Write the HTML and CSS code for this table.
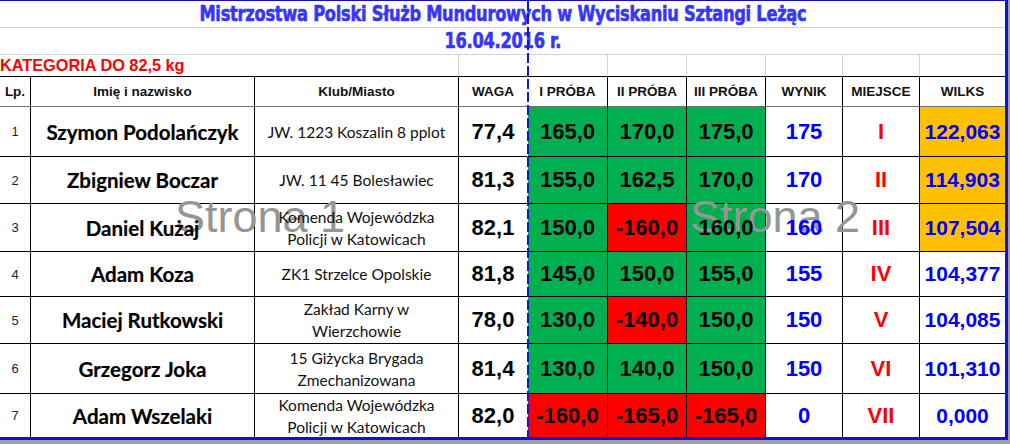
FILE: index.html
```html
<!DOCTYPE html>
<html lang="pl">
<head>
<meta charset="utf-8">
<link rel="stylesheet" href="styles.css">
</head>
<body>
<div class="sheet">
  <div class="grid">
    <div class="title t1"><span>Mistrzostwa Polski Służb Mundurowych w Wyciskaniu Sztangi Leżąc</span></div>
    <div class="title t2"><span>16.04.2016 r.</span></div>

    <div class="cat span3"><span>KATEGORIA DO 82,5 kg</span></div>
    <div class="cat dash"></div>
    <div class="cat"></div>
    <div class="cat"></div>
    <div class="cat"></div>
    <div class="cat"></div>
    <div class="cat"></div>
    <div class="cat last"></div>

    <div class="c h"><span>Lp.</span></div>
    <div class="c h"><span>Imię i nazwisko</span></div>
    <div class="c h"><span>Klub/Miasto</span></div>
    <div class="c h dash"><span>WAGA</span></div>
    <div class="c h"><span>I PRÓBA</span></div>
    <div class="c h"><span>II PRÓBA</span></div>
    <div class="c h"><span>III PRÓBA</span></div>
    <div class="c h"><span>WYNIK</span></div>
    <div class="c h"><span>MIEJSCE</span></div>
    <div class="c h last"><span>WILKS</span></div>

    <div class="c lp"><span>1</span></div>
    <div class="c name"><span>Szymon Podolańczyk</span></div>
    <div class="c club"><span>JW. 1223 Koszalin 8 pplot</span></div>
    <div class="c num dash"><span>77,4</span></div>
    <div class="c num g"><span>165,0</span></div>
    <div class="c num g"><span>170,0</span></div>
    <div class="c num g"><span>175,0</span></div>
    <div class="c num blue"><span>175</span></div>
    <div class="c num red"><span>I</span></div>
    <div class="c num blue wilks o last"><span>122,063</span></div>

    <div class="c lp"><span>2</span></div>
    <div class="c name"><span>Zbigniew Boczar</span></div>
    <div class="c club"><span>JW. 11 45 Bolesławiec</span></div>
    <div class="c num dash"><span>81,3</span></div>
    <div class="c num g"><span>155,0</span></div>
    <div class="c num g"><span>162,5</span></div>
    <div class="c num g"><span>170,0</span></div>
    <div class="c num blue"><span>170</span></div>
    <div class="c num red"><span>II</span></div>
    <div class="c num blue wilks o last"><span>114,903</span></div>

    <div class="c lp"><span>3</span></div>
    <div class="c name"><span>Daniel Kużaj</span></div>
    <div class="c club"><span>Komenda Wojewódzka<br>Policji w Katowicach</span></div>
    <div class="c num dash"><span>82,1</span></div>
    <div class="c num g"><span>150,0</span></div>
    <div class="c num r"><span>-160,0</span></div>
    <div class="c num g"><span>160,0</span></div>
    <div class="c num blue"><span>160</span></div>
    <div class="c num red"><span>III</span></div>
    <div class="c num blue wilks o last"><span>107,504</span></div>

    <div class="c lp"><span>4</span></div>
    <div class="c name"><span>Adam Koza</span></div>
    <div class="c club"><span>ZK1 Strzelce Opolskie</span></div>
    <div class="c num dash"><span>81,8</span></div>
    <div class="c num g"><span>145,0</span></div>
    <div class="c num g"><span>150,0</span></div>
    <div class="c num g"><span>155,0</span></div>
    <div class="c num blue"><span>155</span></div>
    <div class="c num red"><span>IV</span></div>
    <div class="c num blue wilks last"><span>104,377</span></div>

    <div class="c lp"><span>5</span></div>
    <div class="c name"><span>Maciej Rutkowski</span></div>
    <div class="c club"><span>Zakład Karny w<br>Wierzchowie</span></div>
    <div class="c num dash"><span>78,0</span></div>
    <div class="c num g"><span>130,0</span></div>
    <div class="c num r"><span>-140,0</span></div>
    <div class="c num g"><span>150,0</span></div>
    <div class="c num blue"><span>150</span></div>
    <div class="c num red"><span>V</span></div>
    <div class="c num blue wilks last"><span>104,085</span></div>

    <div class="c lp"><span>6</span></div>
    <div class="c name"><span>Grzegorz Joka</span></div>
    <div class="c club"><span>15 Giżycka Brygada<br>Zmechanizowana</span></div>
    <div class="c num dash"><span>81,4</span></div>
    <div class="c num g"><span>130,0</span></div>
    <div class="c num g"><span>140,0</span></div>
    <div class="c num g"><span>150,0</span></div>
    <div class="c num blue"><span>150</span></div>
    <div class="c num red"><span>VI</span></div>
    <div class="c num blue wilks last"><span>101,310</span></div>

    <div class="c lp bot"><span>7</span></div>
    <div class="c name bot"><span>Adam Wszelaki</span></div>
    <div class="c club bot"><span>Komenda Wojewódzka<br>Policji w Katowicach</span></div>
    <div class="c num dash bot"><span>82,0</span></div>
    <div class="c num r bot"><span>-160,0</span></div>
    <div class="c num r bot"><span>-165,0</span></div>
    <div class="c num r bot"><span>-165,0</span></div>
    <div class="c num blue bot"><span>0</span></div>
    <div class="c num red bot"><span>VII</span></div>
    <div class="c num blue wilks last bot"><span>0,000</span></div>
  </div>
  <div class="pagebreak"></div>
  <div class="mark mark1">Strona 1</div>
  <div class="mark mark2">Strona 2</div>
</div>
</body>
</html>
```

FILE: styles.css
```css
html, body {
  margin: 0;
  padding: 0;
}
body {
  background: #a0a0a0;
  width: 1010px;
  height: 444px;
  overflow: hidden;
}
.sheet {
  position: relative;
  width: 1005px;
  background: #fff;
  border-top: 1px solid #1010c8;
  border-right: 3px solid #1010d8;
  border-bottom: 3px solid #1010d8;
}
.grid {
  display: grid;
  grid-template-columns: 31px 224px 204px 69px 80px 79px 79px 77px 77px 85px;
  grid-template-rows: 27px 27px 22px 30px 50px 47px 48px 45px 47px 50px 43px;
}
.grid > div {
  box-sizing: border-box;
  display: flex;
  align-items: center;
  justify-content: center;
  text-align: center;
}
.grid > div > span {
  position: relative;
  z-index: 2;
}
.title {
  grid-column: 1 / -1;
  border-bottom: 1px solid #d4d4d4;
  font-family: "DejaVu Sans", sans-serif;
  font-stretch: condensed;
  font-weight: bold;
  font-size: 21px;
  color: #3535ff;
  letter-spacing: -0.3px;
  -webkit-text-stroke: 0.6px #3535ff;
}
.t1 span { display: inline-block; transform: scaleX(0.86); }
.t2 span { display: inline-block; transform: scaleX(0.86); }
.cat {
  border-right: 1px solid #d4d4d4;
  border-bottom: 1px solid #000;
}
.cat.span3 {
  grid-column: span 3;
  justify-content: flex-start;
  font-family: "Liberation Sans", Arial, sans-serif;
  font-weight: bold;
  font-size: 16.3px;
  color: #ff0000;
  padding-left: 0;
}
.c {
  border-right: 1px solid #000;
  border-bottom: 1px solid #000;
}
.grid > .dash { border-right-color: #fff; }
.grid > .last { border-right: none; }
.grid > .bot { border-bottom: none; }
.h {
  font-family: "Liberation Sans", Arial, sans-serif;
  font-weight: bold;
  font-size: 13.5px;
  color: #111;
  border-bottom-color: #707070;
}
.lp {
  font-family: "Liberation Sans", Arial, sans-serif;
  font-size: 13px;
  color: #222;
}
.name {
  font-family: Lato, "Open Sans", sans-serif;
  font-weight: bold;
  font-size: 20.5px;
  color: #000;
  -webkit-text-stroke: 0.2px #000;
}
.club {
  font-family: Lato, "Open Sans", sans-serif;
  font-size: 15.5px;
  line-height: 22px;
  color: #111;
}
.num {
  font-family: "Liberation Sans", Arial, sans-serif;
  font-weight: bold;
  font-size: 22px;
  color: #000;
}
.wilks { font-size: 21px; }
.blue { color: #0000ff; }
.red { color: #ff0000; }
.g { background: #00b050; }
.r { background: #ff0000; }
.o { background: #ffc000; }
.pagebreak {
  position: absolute;
  left: 527px;
  top: 0;
  bottom: 0;
  width: 2px;
  background: repeating-linear-gradient(to bottom, #1414c8 0 10px, transparent 10px 13px);
  z-index: 3;
}
.mark {
  position: absolute;
  z-index: 1;
  font-family: "Liberation Sans", Arial, sans-serif;
  font-size: 45px;
  line-height: 45px;
  color: #959595;
  white-space: nowrap;
}
.mark1 { left: 175px; top: 193px; }
.mark2 { left: 690px; top: 193px; }
```
